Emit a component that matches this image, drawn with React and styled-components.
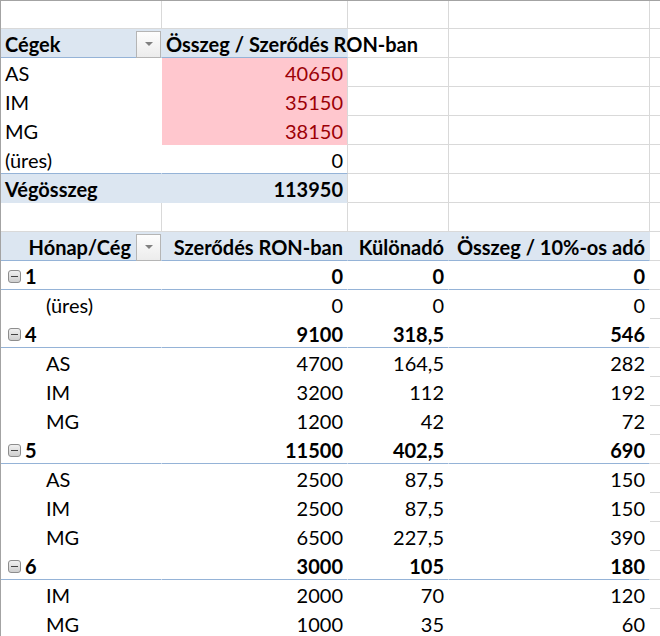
import React from 'react';
import styled, { createGlobalStyle } from 'styled-components';

const GRID = '#d9d9d9';
const BAND = '#dce6f1';
const RULE = '#95b3d7';

const GlobalStyle = createGlobalStyle`
  html, body {
    margin: 0;
    padding: 0;
    background: #fff;
  }
  body {
    font-family: Lato, "Open Sans", sans-serif;
    font-size: 20px;
    color: #000;
  }
`;

const Sheet = styled.div`
  width: 660px;
  height: 636px;
  overflow: hidden;
  border-top: 1px solid #a3a3a3;
  border-left: 1px solid #a3a3a3;
  box-sizing: border-box;
`;

const Row = styled.div`
  display: flex;
  height: ${(p) => p.$h || 29}px;
`;

const Cell = styled.div`
  flex: none;
  width: ${(p) => p.$w}px;
  height: 100%;
  box-sizing: border-box;
  padding: 2px 4px 0 ${(p) => p.$indent || 4}px;
  display: flex;
  align-items: center;
  gap: 5px;
  justify-content: ${(p) => (p.$right ? 'flex-end' : 'flex-start')};
  line-height: 26px;
  white-space: nowrap;
  font-weight: ${(p) => (p.$bold ? 700 : 400)};
  color: ${(p) => (p.$red ? '#9c0006' : '#000')};
  background: ${(p) => p.$fill || 'transparent'};
  border-right: 1px solid ${(p) => p.$vline || 'transparent'};
  border-bottom: 1px solid ${(p) => p.$hline || 'transparent'};
`;

const Spread = styled.span`
  flex: 1;
`;

const Filler = styled.div`
  flex: 1;
  height: 100%;
  box-sizing: border-box;
  border-bottom: 1px solid ${GRID};
`;

const DropButton = styled.span`
  flex: none;
  width: 25px;
  height: 27px;
  margin-right: -4px;
  box-sizing: border-box;
  border: 1px solid #b5b5b5;
  background: linear-gradient(#fdfdfd, #ececec);
  display: flex;
  align-items: center;
  justify-content: center;

  &::after {
    content: '';
    border-left: 4px solid transparent;
    border-right: 4px solid transparent;
    border-top: 4px solid #808080;
  }
`;

const Toggle = styled.span`
  flex: none;
  width: 13px;
  height: 13px;
  box-sizing: border-box;
  border: 1px solid #8d8d8d;
  border-radius: 3px;
  background: linear-gradient(#f0f0f0, #cfcfcf);
  display: flex;
  align-items: center;
  justify-content: center;
  margin-right: -1px;

  &::after {
    content: '';
    width: 7px;
    height: 1px;
    background: #444;
  }
`;

const W = [161, 186, 101, 201];

// plain worksheet cells to the right of the pivot
const GridCells = ({ from }) => (
  <>
    {W.slice(from).map((w, i) => (
      <Cell key={i} $w={w} $vline={GRID} $hline={GRID} />
    ))}
    <Filler />
  </>
);

const companies = [
  ['AS', '40650', true],
  ['IM', '35150', true],
  ['MG', '38150', true],
  ['(üres)', '0', false],
];

const months = [
  { m: '1', t: ['0', '0', '0'], items: [['(üres)', '0', '0', '0']] },
  {
    m: '4',
    t: ['9100', '318,5', '546'],
    items: [
      ['AS', '4700', '164,5', '282'],
      ['IM', '3200', '112', '192'],
      ['MG', '1200', '42', '72'],
    ],
  },
  {
    m: '5',
    t: ['11500', '402,5', '690'],
    items: [
      ['AS', '2500', '87,5', '150'],
      ['IM', '2500', '87,5', '150'],
      ['MG', '6500', '227,5', '390'],
    ],
  },
  {
    m: '6',
    t: ['3000', '105', '180'],
    items: [
      ['IM', '2000', '70', '120'],
      ['MG', '1000', '35', '60'],
    ],
  },
];

const App = () => (
  <>
    <GlobalStyle />
    <Sheet>
      <Row $h={28}>
        <GridCells from={0} />
      </Row>

      {/* Cégek pivot */}
      <Row>
        <Cell $w={W[0]} $fill={BAND} $hline={RULE} $bold>
          Cégek
          <Spread />
          <DropButton />
        </Cell>
        <Cell $w={W[1]} $fill={BAND} $hline={RULE} $bold>
          Összeg / Szerődés RON-ban
        </Cell>
        <GridCells from={2} />
      </Row>
      {companies.map(([name, val, hot], i) => {
        const last = i === companies.length - 1;
        return (
          <Row key={name}>
            <Cell $w={W[0]} $hline={last ? RULE : undefined}>
              {name}
            </Cell>
            <Cell
              $w={W[1]}
              $right
              $red={hot}
              $fill={hot ? '#ffc7ce' : undefined}
              $vline={GRID}
              $hline={last ? RULE : undefined}
            >
              {val}
            </Cell>
            <GridCells from={2} />
          </Row>
        );
      })}
      <Row>
        <Cell $w={W[0]} $fill={BAND} $bold>
          Végösszeg
        </Cell>
        <Cell $w={W[1]} $fill={BAND} $bold $right $vline={GRID}>
          113950
        </Cell>
        <GridCells from={2} />
      </Row>
      <Row>
        <GridCells from={0} />
      </Row>

      {/* Hónap/Cég pivot */}
      <Row>
        <Cell $w={W[0]} $fill={BAND} $hline={RULE} $bold $right>
          Hónap/Cég
          <DropButton />
        </Cell>
        <Cell $w={W[1]} $fill={BAND} $hline={RULE} $bold $right>
          Szerődés RON-ban
        </Cell>
        <Cell $w={W[2]} $fill={BAND} $hline={RULE} $bold $right>
          Különadó
        </Cell>
        <Cell $w={W[3]} $fill={BAND} $hline={RULE} $bold $right>
          Összeg / 10%-os adó
        </Cell>
        <Filler />
      </Row>
      {months.map((g) => (
        <React.Fragment key={g.m}>
          <Row>
            <Cell $w={W[0]} $hline={RULE} $bold $indent={7}>
              <Toggle />
              {g.m}
            </Cell>
            {g.t.map((v, i) => (
              <Cell key={i} $w={W[i + 1]} $hline={RULE} $bold $right>
                {v}
              </Cell>
            ))}
            <Filler />
          </Row>
          {g.items.map(([name, ...vals]) => (
            <Row key={name}>
              <Cell $w={W[0]} $indent={45}>
                {name}
              </Cell>
              {vals.map((v, i) => (
                <Cell key={i} $w={W[i + 1]} $right>
                  {v}
                </Cell>
              ))}
              <Filler />
            </Row>
          ))}
        </React.Fragment>
      ))}
    </Sheet>
  </>
);

export default App;
